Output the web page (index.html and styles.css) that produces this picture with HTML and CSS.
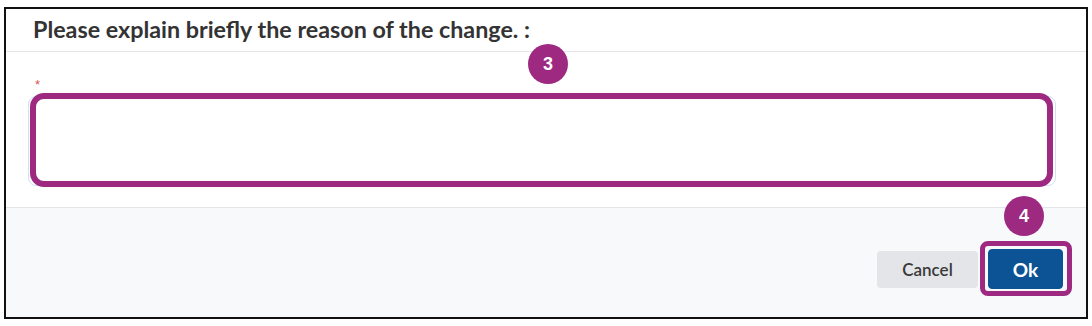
FILE: index.html
```html
<!DOCTYPE html>
<html>
<head>
<meta charset="utf-8">
<link rel="stylesheet" href="styles.css">
</head>
<body>
<div class="frame">
  <div class="header">
    <h1 class="title">Please explain briefly the reason of the change. :</h1>
  </div>
  <div class="body">
    <span class="badge badge-3">3</span>
    <div class="req">*</div>
    <div class="field">
      <textarea class="input"></textarea>
      <span class="ring ring-field"></span>
    </div>
  </div>
  <div class="footer">
    <button class="btn btn-cancel">Cancel</button>
    <div class="ok-wrap">
      <span class="badge badge-4">4</span>
      <button class="btn btn-ok">Ok</button>
      <span class="ring ring-ok"></span>
    </div>
  </div>
</div>
</body>
</html>
```

FILE: styles.css
```css
* { box-sizing: border-box; }
html, body { margin: 0; padding: 0; background: #ffffff; }
body { font-family: Lato, "Open Sans", Arial, sans-serif; }

.frame {
  margin: 7px 4px 0 4px;
  width: 1084px;
  height: 312px;
  border: 2px solid #111111;
  display: flex;
  flex-direction: column;
  background: #ffffff;
}

.header {
  height: 43px;
  border-bottom: 1px solid #e3e5e8;
  padding: 0 0 0 27px;
  display: flex;
  align-items: center;
}
.title {
  margin: 0;
  font-size: 23.3px;
  font-weight: 700;
  color: #333333;
  letter-spacing: 0;
  position: relative;
  top: -1px;
}

.body {
  position: relative;
  height: 156px;
  border-bottom: 1px solid #e3e5e8;
  padding: 28px 30px 0 22px;
}
.req {
  color: #e0524f;
  font-size: 13px;
  line-height: 10px;
  height: 12px;
  padding-left: 7px;
  font-family: "Liberation Sans", Arial, sans-serif;
}
.field {
  position: relative;
  height: 90px;
  margin-top: 4px;
}
.input {
  display: block;
  width: 100%;
  height: 90px;
  border: 1px solid #cfe1f5;
  border-radius: 8px;
  resize: none;
  background: #ffffff;
  outline: none;
}

.ring {
  position: absolute;
  border: 5px solid #9d2a80;
  pointer-events: none;
}
.ring-field {
  left: 2px;
  right: 3px;
  top: -3px;
  bottom: -1px;
  border-width: 6px;
  border-radius: 14px;
}

.badge {
  position: absolute;
  width: 40px;
  height: 40px;
  border-radius: 50%;
  background: #9d2a80;
  color: #ffffff;
  font-family: "Liberation Sans", Arial, sans-serif;
  font-weight: 700;
  font-size: 18px;
  display: flex;
  align-items: center;
  justify-content: center;
  z-index: 2;
}
.badge-3 { left: 522px; top: -8px; }

.footer {
  flex: 1;
  background: #f8f9fa;
  display: flex;
  justify-content: flex-end;
  align-items: flex-start;
  padding: 41px 23px 0 0;
  gap: 10px;
}
.btn {
  font-family: Lato, "Open Sans", Arial, sans-serif;
  border-radius: 4px;
  cursor: pointer;
}
.btn-cancel {
  margin-top: 2px;
  width: 101px;
  height: 37px;
  background: #e3e5e8;
  color: #3a3a3a;
  border: none;
  font-weight: 600;
  font-size: 17px;
}
.ok-wrap {
  position: relative;
}
.btn-ok {
  display: block;
  width: 75px;
  height: 40px;
  background: #0b5394;
  color: #ffffff;
  border: 1px solid #0b5394;
  font-weight: 700;
  font-size: 19px;
}
.ring-ok {
  left: -8px;
  right: -9px;
  top: -8px;
  bottom: -7px;
  border-radius: 8px;
}
.badge-4 { left: 16px; top: -53px; }
```
